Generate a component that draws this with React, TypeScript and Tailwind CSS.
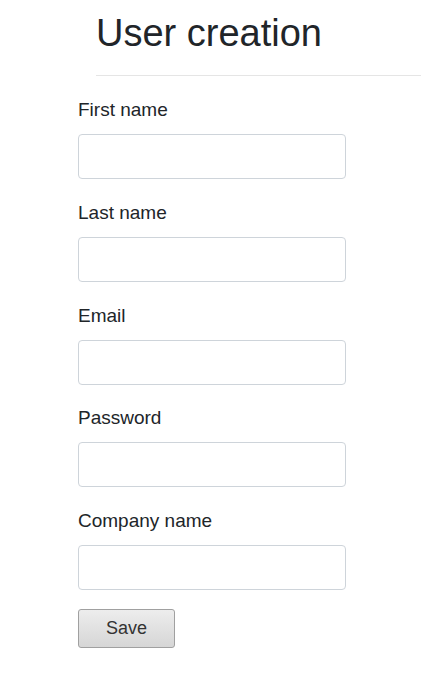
const fields = ['First name', 'Last name', 'Email', 'Password', 'Company name'];

export default function App() {
  return (
    <div className="min-h-[679px] bg-white text-[#212529] font-['Liberation_Sans',Arial,sans-serif]">
      {/* Header */}
      <div className="pl-[96px]">
        <h1 className="pt-[11px] text-[38px] leading-[44px] font-normal">User creation</h1>
        <div className="mt-[20px] border-t border-[#e5e5e5]" />
      </div>

      {/* Form */}
      <form className="pl-[78px] pt-[20px] flex flex-col" onSubmit={(e) => e.preventDefault()}>
        {fields.map((label) => (
          <div key={label} className="flex flex-col mb-[19.75px]">
            <label className="text-[19px] leading-[27px] mb-[11px]">{label}</label>
            <input
              type={label === 'Password' ? 'password' : 'text'}
              className="w-[268px] h-[45px] rounded-[4px] border border-[#ced4da] bg-white px-3 outline-none"
            />
          </div>
        ))}
        <button
          type="submit"
          className="w-[97px] h-[39px] -mt-[0.75px] rounded-[3px] border border-[#a0a0a0] bg-linear-to-b from-[#ededed] to-[#d6d6d6] text-[18px] text-[#333]"
        >
          Save
        </button>
      </form>
    </div>
  );
}
